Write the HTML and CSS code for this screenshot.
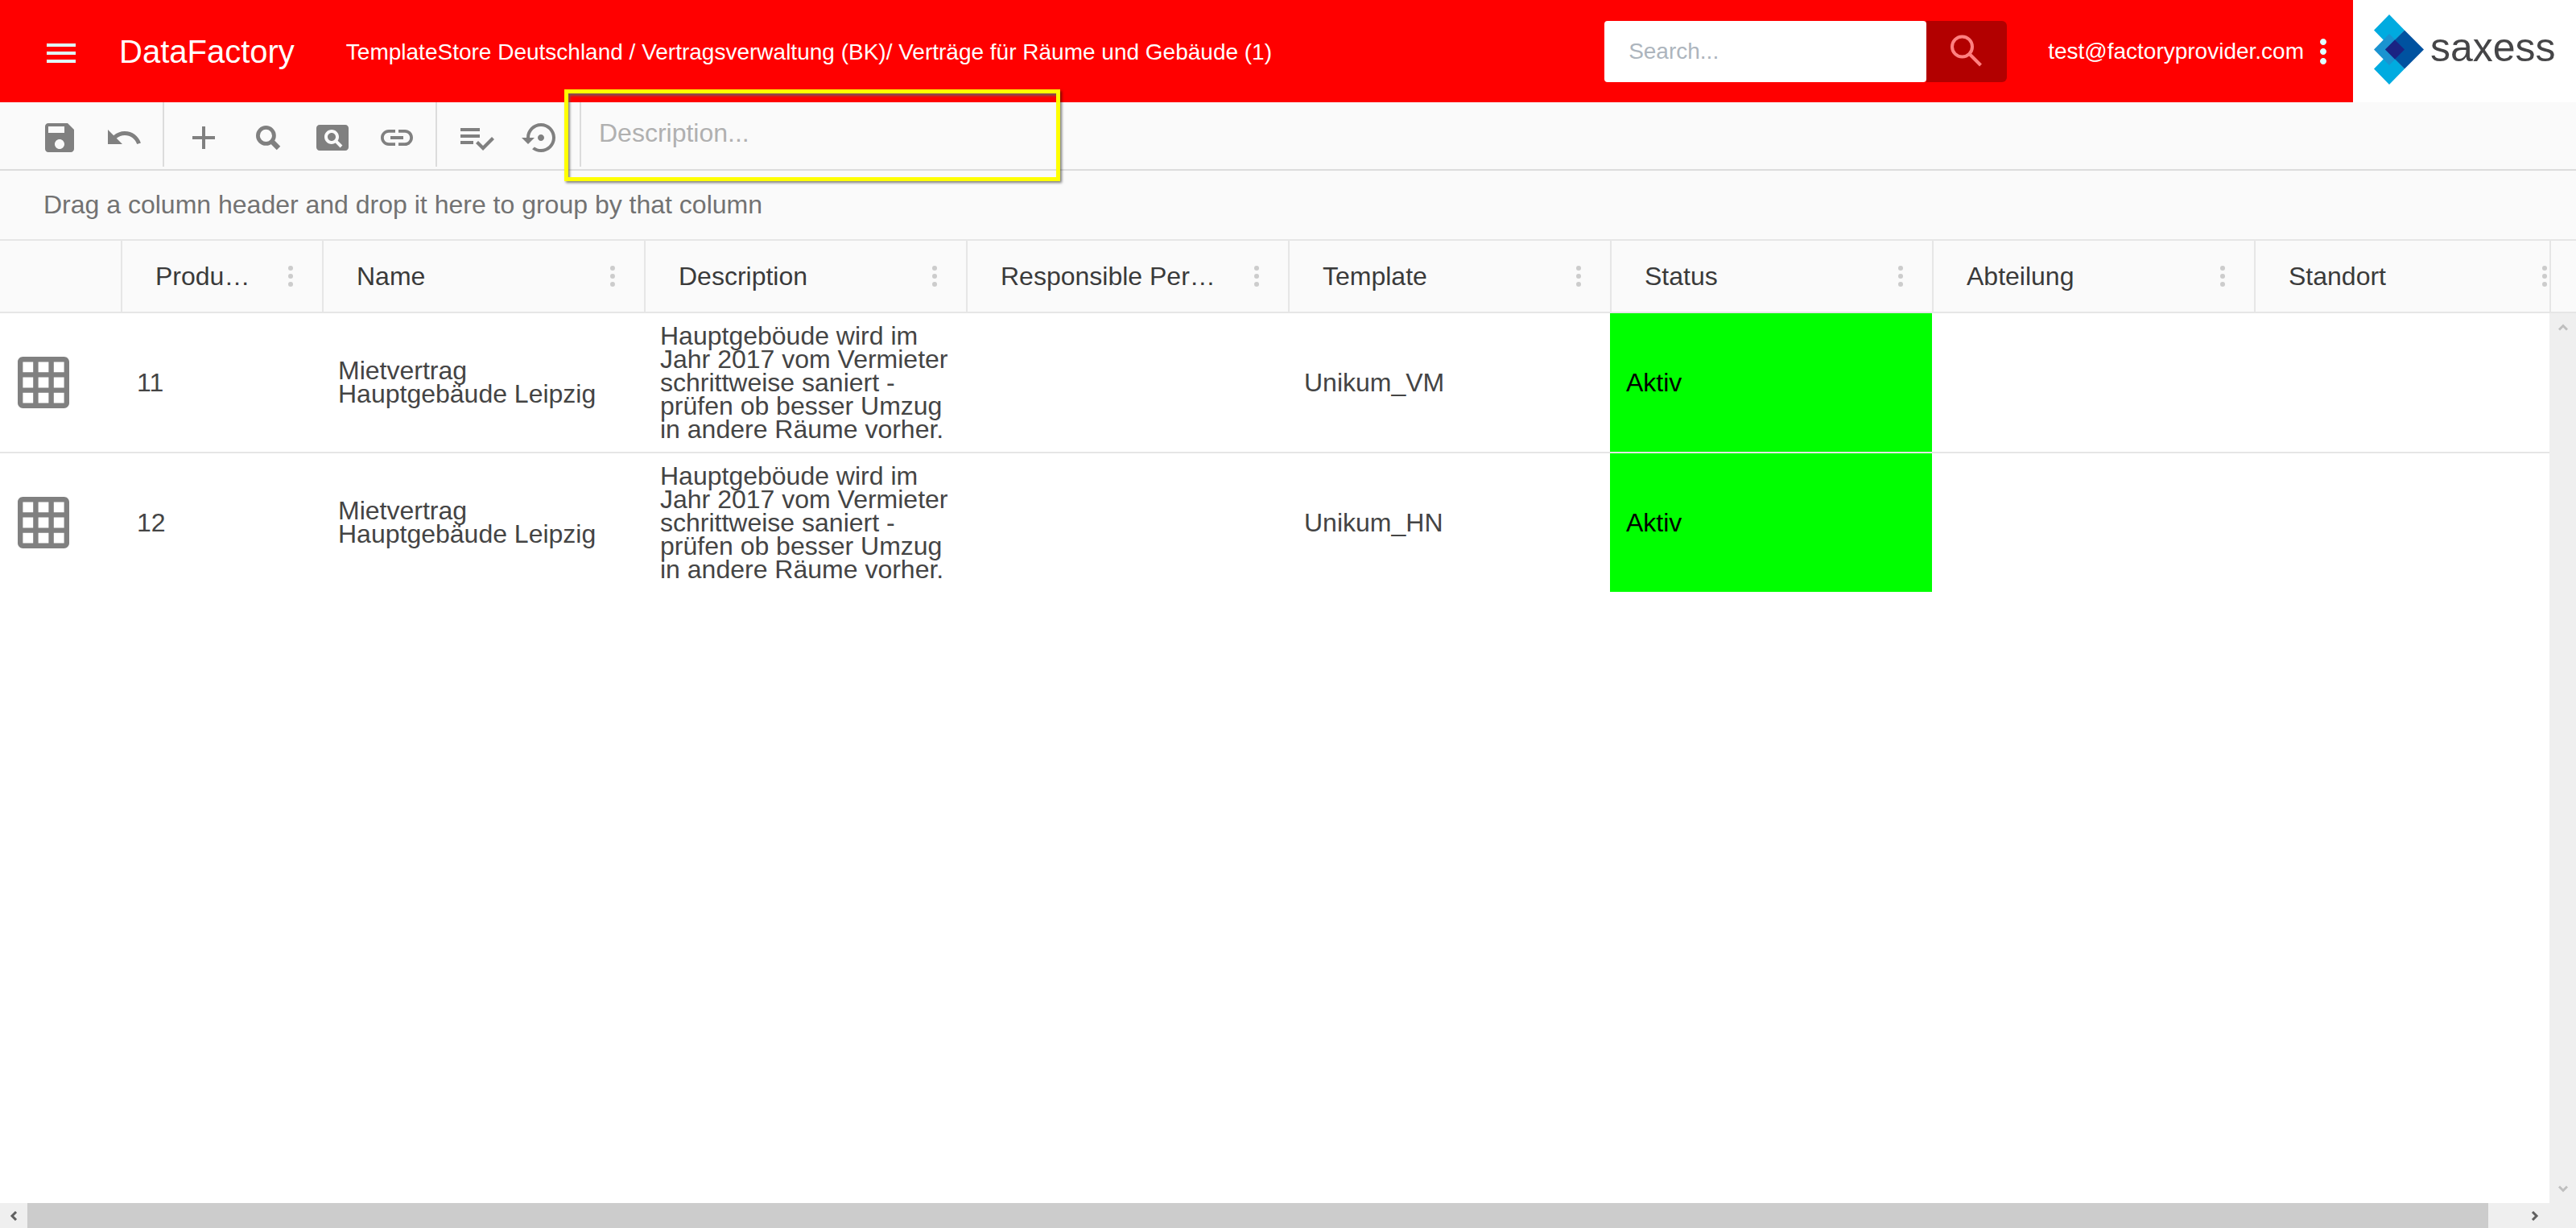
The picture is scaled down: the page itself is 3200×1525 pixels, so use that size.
FILE: index.html
```html
<!DOCTYPE html>
<html lang="de">
<head>
<meta charset="utf-8">
<title>DataFactory</title>
<link rel="stylesheet" href="styles.css">
</head>
<body>
<header class="topbar">
  <button class="icon-btn menu-btn" type="button" aria-label="Menu"><svg class="icon" viewBox="0 0 24 24"><path d="M3 18h18v-2H3v2zm0-5h18v-2H3v2zm0-7v2h18V6H3z"/></svg></button>
  <h1 class="brand">DataFactory</h1>
  <nav class="crumbs">TemplateStore Deutschland / Vertragsverwaltung (BK)/ Verträge für Räume und Gebäude (1)</nav>
  <form class="search">
    <input class="search-input" type="text" placeholder="Search..." aria-label="Search">
    <button class="search-btn" type="button" aria-label="Start search"><svg class="search-icon" viewBox="0 0 40 40"><circle cx="14.500" cy="15" r="12.500"/><path d="M23.500 24L37.500 38"/></svg></button>
  </form>
  <div class="account">
    <span>test@factoryprovider.com</span>
    <button class="icon-btn" type="button" aria-label="Account menu"><svg class="icon" viewBox="0 0 24 24"><path d="M12 8c1.100 0 2-.9 2-2s-.9-2-2-2-2 .9-2 2 .9 2 2 2zm0 2c-1.100 0-2 .9-2 2s.9 2 2 2 2-.9 2-2-.9-2-2-2zm0 6c-1.100 0-2 .9-2 2s.9 2 2 2 2-.9 2-2-.9-2-2-2z"/></svg></button>
  </div>
  <div class="logo">
    <svg class="logo-mark" viewBox="0 0 62 87">
      <path fill="#00abe0" d="M19 0L38 19.500 19 39 0 19.500zM19 48L38 67.500 19 87 0 67.500z"/>
      <path fill="#1a93d0" d="M19 24L38 43.500 19 63 0 43.500z"/>
      <path fill="#0052a0" d="M38 19.500L62 43.500 38 67.500 14 43.500z"/>
      <path fill="#1b2383" d="M26 31.500L38 43.500 26 55.500 14 43.500z"/>
    </svg>
    <span class="logo-name">saxess</span>
  </div>
</header>

<div class="toolbar">
  <div class="tools">
    <button class="icon-btn" type="button" aria-label="Save"><svg class="icon" viewBox="0 0 24 24"><path d="M17 3H5c-1.110 0-2 .9-2 2v14c0 1.100.89 2 2 2h14c1.100 0 2-.9 2-2V7l-4-4zm-5 16c-1.660 0-3-1.340-3-3s1.340-3 3-3 3 1.340 3 3-1.340 3-3 3zm3-10H5V5h10v4z"/></svg></button>
    <button class="icon-btn" type="button" aria-label="Undo"><svg class="icon" viewBox="0 0 24 24"><path d="M12.500 8c-2.650 0-5.050.99-6.900 2.600L2 7v9h9l-3.620-3.620c1.390-1.160 3.160-1.880 5.120-1.880 3.540 0 6.550 2.310 7.600 5.500l2.370-.78C21.080 11.030 17.150 8 12.500 8z"/></svg></button>
  </div>
  <div class="tools">
    <button class="icon-btn" type="button" aria-label="Add"><svg class="icon" viewBox="0 0 24 24"><path d="M19 13h-6v6h-2v-6H5v-2h6V5h2v6h6v2z"/></svg></button>
    <button class="icon-btn" type="button" aria-label="Find"><svg class="icon find" viewBox="0 0 24 24"><circle cx="10.700" cy="10.700" r="5"/><path class="handle" d="M14.300 14.300L18.500 18.500"/></svg></button>
    <button class="icon-btn" type="button" aria-label="Page view"><svg class="icon" viewBox="0 0 24 24"><path d="M11.500 9C10.120 9 9 10.120 9 11.500s1.120 2.500 2.500 2.500 2.500-1.120 2.500-2.500S12.880 9 11.500 9zM20 4H4c-1.100 0-2 .9-2 2v12c0 1.100.9 2 2 2h16c1.100 0 2-.9 2-2V6c0-1.100-.9-2-2-2zm-3.210 14.210l-2.910-2.910c-.69.44-1.510.7-2.390.7C9.010 16 7 13.990 7 11.500S9.010 7 11.500 7 16 9.010 16 11.500c0 .88-.26 1.690-.7 2.390l2.910 2.900-1.420 1.420z"/></svg></button>
    <button class="icon-btn" type="button" aria-label="Link"><svg class="icon" viewBox="0 0 24 24"><path d="M3.900 12c0-1.710 1.390-3.100 3.100-3.100h4V7H7c-2.760 0-5 2.240-5 5s2.240 5 5 5h4v-1.900H7c-1.710 0-3.100-1.390-3.100-3.100zM8 13h8v-2H8v2zm9-6h-4v1.900h4c1.710 0 3.100 1.390 3.100 3.100s-1.390 3.100-3.100 3.100h-4V17h4c2.760 0 5-2.240 5-5s-2.240-5-5-5z"/></svg></button>
  </div>
  <div class="tools">
    <button class="icon-btn" type="button" aria-label="Apply list"><svg class="icon" viewBox="0 0 24 24"><path d="M14 10H2v2h12v-2zm0-4H2v2h12V6zM2 16h8v-2H2v2zm19.500-4.500L23 13l-6.990 7-4.510-4.500L13 14l3.010 3 5.490-5.500z"/></svg></button>
    <button class="icon-btn" type="button" aria-label="Restore"><svg class="icon" viewBox="0 0 24 24"><path d="M14 12c0-1.100-.9-2-2-2s-2 .9-2 2 .9 2 2 2 2-.9 2-2zm-2-9c-4.970 0-9 4.030-9 9H0l4 4 4-4H5c0-3.870 3.130-7 7-7s7 3.130 7 7-3.130 7-7 7c-1.510 0-2.910-.49-4.060-1.300l-1.420 1.440C8.040 20.300 9.940 21 12 21c4.970 0 9-4.030 9-9s-4.030-9-9-9z"/></svg></button>
  </div>
  <div class="desc-field">
    <input class="desc-input" type="text" placeholder="Description..." aria-label="Description">
    <div class="highlight"></div>
  </div>
</div>

<div class="groupbar">Drag a column header and drop it here to group by that column</div>

<main class="grid">
  <div class="viewport">
    <table class="table">
      <colgroup><col class="c-icon"><col class="c-id"><col><col><col><col><col><col><col></colgroup>
      <thead>
        <tr>
          <th></th>
          <th><div class="head"><span>Produ…</span><svg class="dots" viewBox="0 0 6 26"><circle cx="3" cy="3" r="3"/><circle cx="3" cy="13" r="3"/><circle cx="3" cy="23" r="3"/></svg></div></th>
          <th><div class="head"><span>Name</span><svg class="dots" viewBox="0 0 6 26"><circle cx="3" cy="3" r="3"/><circle cx="3" cy="13" r="3"/><circle cx="3" cy="23" r="3"/></svg></div></th>
          <th><div class="head"><span>Description</span><svg class="dots" viewBox="0 0 6 26"><circle cx="3" cy="3" r="3"/><circle cx="3" cy="13" r="3"/><circle cx="3" cy="23" r="3"/></svg></div></th>
          <th><div class="head"><span>Responsible Per…</span><svg class="dots" viewBox="0 0 6 26"><circle cx="3" cy="3" r="3"/><circle cx="3" cy="13" r="3"/><circle cx="3" cy="23" r="3"/></svg></div></th>
          <th><div class="head"><span>Template</span><svg class="dots" viewBox="0 0 6 26"><circle cx="3" cy="3" r="3"/><circle cx="3" cy="13" r="3"/><circle cx="3" cy="23" r="3"/></svg></div></th>
          <th><div class="head"><span>Status</span><svg class="dots" viewBox="0 0 6 26"><circle cx="3" cy="3" r="3"/><circle cx="3" cy="13" r="3"/><circle cx="3" cy="23" r="3"/></svg></div></th>
          <th><div class="head"><span>Abteilung</span><svg class="dots" viewBox="0 0 6 26"><circle cx="3" cy="3" r="3"/><circle cx="3" cy="13" r="3"/><circle cx="3" cy="23" r="3"/></svg></div></th>
          <th><div class="head"><span>Standort</span><svg class="dots" viewBox="0 0 6 26"><circle cx="3" cy="3" r="3"/><circle cx="3" cy="13" r="3"/><circle cx="3" cy="23" r="3"/></svg></div></th>
        </tr>
      </thead>
      <tbody>
        <tr>
          <td><svg class="grid-icon" viewBox="0 0 20 20"><path d="M18 0H2C.9 0 0 .9 0 2v16c0 1.100.9 2 2 2h16c1.100 0 2-.9 2-2V2c0-1.100-.9-2-2-2zM6 18H2v-4h4v4zm0-6H2V8h4v4zm0-6H2V2h4v4zm6 12H8v-4h4v4zm0-6H8V8h4v4zm0-6H8V2h4v4zm6 12h-4v-4h4v4zm0-6h-4V8h4v4zm0-6h-4V2h4v4z"/></svg></td>
          <td>11</td>
          <td>Mietvertrag Hauptgebäude Leipzig</td>
          <td>Hauptgeböude wird im Jahr 2017 vom Vermieter schrittweise saniert - prüfen ob besser Umzug in andere Räume vorher.</td>
          <td></td>
          <td>Unikum_VM</td>
          <td class="active">Aktiv</td>
          <td></td>
          <td></td>
        </tr>
        <tr>
          <td><svg class="grid-icon" viewBox="0 0 20 20"><path d="M18 0H2C.9 0 0 .9 0 2v16c0 1.100.9 2 2 2h16c1.100 0 2-.9 2-2V2c0-1.100-.9-2-2-2zM6 18H2v-4h4v4zm0-6H2V8h4v4zm0-6H2V2h4v4zm6 12H8v-4h4v4zm0-6H8V8h4v4zm0-6H8V2h4v4zm6 12h-4v-4h4v4zm0-6h-4V8h4v4zm0-6h-4V2h4v4z"/></svg></td>
          <td>12</td>
          <td>Mietvertrag Hauptgebäude Leipzig</td>
          <td>Hauptgeböude wird im Jahr 2017 vom Vermieter schrittweise saniert - prüfen ob besser Umzug in andere Räume vorher.</td>
          <td></td>
          <td>Unikum_HN</td>
          <td class="active">Aktiv</td>
          <td></td>
          <td></td>
        </tr>
      </tbody>
    </table>
  </div>
  <div class="side">
    <div class="corner"></div>
    <div class="vscroll">
      <svg class="arrow" viewBox="0 0 12 12"><path d="M1 8.500L6 3.500 11 8.500"/></svg>
      <svg class="arrow" viewBox="0 0 12 12"><path d="M1 3.500L6 8.500 11 3.500"/></svg>
    </div>
  </div>
</main>
<div class="hscroll">
  <svg class="arrow arrow-on" viewBox="0 0 12 12"><path d="M9 1L4 6 9 11"/></svg>
  <div class="thumb"></div>
  <svg class="arrow arrow-on" viewBox="0 0 12 12"><path d="M3 1L8 6 3 11"/></svg>
</div>
</body>
</html>
```
FILE: styles.css
```css
* { box-sizing: border-box; }

body {
  margin: 0;
  height: 100vh;
  display: flex;
  flex-direction: column;
  background: #fff;
  color: #444;
  font: 32px/36px Arial, "Liberation Sans", sans-serif;
}

button, input { font: inherit; border: 0; padding: 0; margin: 0; outline: 0; }

.icon-btn {
  display: flex;
  flex: none;
  background: none;
  color: inherit;
}

.icon { width: 48px; height: 48px; fill: currentColor; }

/* top bar */
.topbar {
  display: flex;
  align-items: center;
  height: 127px;
  flex: none;
  background: #f00;
  color: #fff;
  font-size: 28px;
}

.menu-btn { margin: 4px 48px 0 52px; color: #e0ffff; }
.brand { margin: 0; font-size: 40px; font-weight: 400; }
.crumbs { flex: 1; margin: 2px 0 0 64px; white-space: nowrap; }
.search { display: flex; height: 76px; }

.search-input {
  width: 400px;
  padding: 0 30px;
  border-radius: 4px;
  background: #fff;
}
.search-input::placeholder { color: #adb5bd; opacity: 1; }

.search-btn {
  display: flex;
  align-items: center;
  justify-content: center;
  width: 100px;
  padding-bottom: 2px;
  border-radius: 0 6px 6px 0;
  background: #b20000;
}
.search-icon { width: 40px; height: 40px; fill: none; stroke: #ff8080; stroke-width: 4; }

.account { display: flex; align-items: center; margin: 0 13px 0 51px; }
.account .icon { fill: #e0ffff; }

.logo {
  display: flex;
  align-items: center;
  gap: 8px;
  width: 277px;
  height: 100%;
  padding: 0 0 4px 26px;
  background: #fff;
  color: #454547;
  font-size: 50px;
}
.logo-mark { width: 62px; height: 87px; }
.logo-name { padding-bottom: 6px; }

/* toolbar */
.toolbar {
  display: flex;
  height: 85px;
  flex: none;
  padding-left: 25px;
  background: #fafafa;
  border-bottom: 2px solid #dcdcdc;
}

.tools {
  display: flex;
  align-items: center;
  gap: 32px;
  height: 80px;
  padding: 8px 24px 0 25px;
  border-right: 2px solid #dcdcdc;
  color: #808080;
}

.find { fill: none; stroke: currentColor; stroke-width: 2.4; }
.handle { stroke-width: 3.2; }

.desc-field { position: relative; }

.desc-input {
  width: 560px;
  height: 80px;
  padding: 0 22px 4px;
  background: transparent;
}
.desc-input::placeholder { color: #b0b0b0; opacity: 1; }

/* marker frame laid over the description field */
.highlight {
  position: absolute;
  left: -21px;
  top: -16px;
  width: 616px;
  height: 114px;
  border: 5px solid #ff0;
  box-shadow: 2px 2px 3px rgba(0, 0, 0, .5), inset 2px 3px 3px rgba(100, 100, 100, .8);
  pointer-events: none;
}

.groupbar {
  height: 87px;
  flex: none;
  padding: 24px 54px;
  background: #fafafa;
  border-bottom: 2px solid #e6e6e6;
  color: #727272;
}

/* data grid */
.grid { display: flex; flex: 1; min-height: 0; }
.viewport { flex: 1; min-width: 0; overflow: hidden; }

.table {
  width: 3200px;
  table-layout: fixed;
  border-collapse: separate;
  border-spacing: 0;
}
.c-icon { width: 150px; }
.c-id { width: 250px; }

th {
  height: 90px;
  padding: 0;
  background: #fafafa;
  border-left: 2px solid #e6e6e6;
  border-bottom: 2px solid #e6e6e6;
  color: #3a3a3a;
  font-weight: 400;
  text-align: left;
}
th:first-child { border-left: 0; }

.head {
  display: flex;
  align-items: center;
  justify-content: space-between;
  padding: 0 36px 0 41px;
  white-space: nowrap;
}
.dots { flex: none; width: 6px; height: 26px; fill: #ccc; }

td {
  height: 174px;
  padding: 0 20px;
  border-bottom: 2px solid #e6e6e6;
  line-height: 29px;
}
td:first-child { padding-left: 22px; }
tbody tr:last-child td { height: 172px; border-bottom: 0; }

.active { background: #0f0; color: #000; }
.grid-icon { display: block; width: 64px; height: 64px; fill: #808080; }

/* scrollbars */
.side { display: flex; flex-direction: column; width: 33px; }
.corner {
  height: 90px;
  background: #fafafa;
  border-left: 2px solid #e6e6e6;
  border-bottom: 2px solid #e6e6e6;
}
.vscroll {
  display: flex;
  flex: 1;
  flex-direction: column;
  align-items: center;
  justify-content: space-between;
  padding: 12px 0;
  background: #efefef;
}
.arrow { flex: none; width: 12px; height: 12px; fill: none; stroke: #bfbfbf; stroke-width: 3; }
.arrow-on { stroke: #606060; }

.hscroll {
  display: flex;
  align-items: center;
  height: 31px;
  flex: none;
  padding: 0 45px 0 11px;
  background: #efefef;
}
.thumb { flex: 1; height: 100%; margin: 0 52px 0 11px; background: #ccc; }
```
